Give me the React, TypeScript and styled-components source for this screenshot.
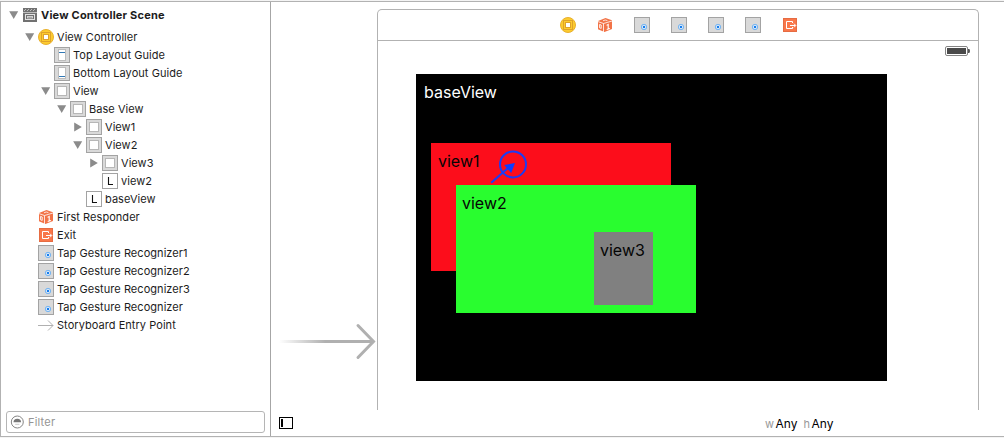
import React from "react";
import styled, { createGlobalStyle } from "styled-components";

const GlobalStyle = createGlobalStyle`
  * { box-sizing: border-box; }
  body { margin: 0; background: #fff; overflow: hidden; }
`;

const Window = styled.div`
  width: 1004px;
  height: 438px;
  display: flex;
  flex-direction: column;
  background: #f4f4f4;
  padding-top: 1px;
  font-family: Inter, "Liberation Sans", sans-serif;
  color: #1c1c1c;
`;

const Panes = styled.div`
  display: flex;
  height: 436px;
  border: solid #b2b2b2;
  border-width: 1px 0 1px 1px;
  background: #fff;
`;

const Outline = styled.aside`
  width: 270px;
  flex: none;
  display: flex;
  flex-direction: column;
  border-right: 1px solid #a6a6a6;
  padding: 4px 5px 3px;
`;

const Tree = styled.div`
  flex: 1;
`;

const Row = styled.div<{ $depth: number }>`
  display: flex;
  align-items: center;
  height: 18px;
  padding-left: ${(p) => p.$depth * 16 + 3}px;
`;

const SceneRow = styled(Row)`
  margin-bottom: 4px;
`;

const Disclosure = styled.span`
  width: 13px;
  height: 16px;
  flex: none;
  display: flex;
`;

const Icon = styled.svg`
  width: 16px;
  height: 16px;
  flex: none;
  display: block;
`;

const Label = styled.span<{ $bold?: boolean }>`
  margin-left: 3px;
  font-size: 11px;
  line-height: 18px;
  font-weight: ${(p) => (p.$bold ? 700 : 400)};
  letter-spacing: ${(p) => (p.$bold ? 0.2 : 0.05)}px;
  white-space: nowrap;
`;

const FilterField = styled.div`
  height: 22px;
  display: flex;
  align-items: center;
  gap: 2px;
  padding-left: 3px;
  border: 1px solid #b5b5b5;
  border-radius: 3px;
  color: #959595;
  font-size: 11px;
  letter-spacing: 0.2px;
`;

const Editor = styled.main`
  flex: 1;
  display: flex;
  flex-direction: column;
`;

const Canvas = styled.div`
  display: flex;
  height: 408px;
  padding-top: 7px;
`;

const EntrySpace = styled.div`
  width: 106px;
  flex: none;
  padding: 312px 0 0 8px;
`;

const Device = styled.section`
  width: 602px;
  border: 1px solid #b2b2b2;
  border-bottom: 0;
  border-radius: 5px 5px 0 0;
`;

const Dock = styled.div`
  height: 31px;
  display: flex;
  align-items: center;
  justify-content: center;
  gap: 21px;
  padding-left: 2px;
  border-bottom: 1px solid #b2b2b2;
`;

const StatusBar = styled.div`
  height: 33px;
  display: flex;
  justify-content: flex-end;
  padding: 5px 8px 0 0;
`;

const BaseView = styled.div`
  position: relative;
  width: 471px;
  height: 307px;
  margin-left: 38px;
  background: #000;
`;

const Box = styled.div<{ $x: number; $y: number; $w: number; $h: number; $fill: string }>`
  position: absolute;
  left: ${(p) => p.$x}px;
  top: ${(p) => p.$y}px;
  width: ${(p) => p.$w}px;
  height: ${(p) => p.$h}px;
  background: ${(p) => p.$fill};
`;

const ViewLabel = styled.div<{ $inset: number; $light?: boolean }>`
  padding: 8px 0 0 ${(p) => p.$inset}px;
  font-size: 16px;
  line-height: 20px;
  white-space: nowrap;
  color: ${(p) => (p.$light ? "#fff" : "#050505")};
`;

const Pointer = styled.svg`
  position: absolute;
  left: 73px;
  top: 75px;
  width: 40px;
  height: 36px;
`;

const BottomBar = styled.footer`
  flex: 1;
  display: flex;
  align-items: center;
  padding-left: 8px;
`;

const SizeClass = styled.div`
  display: flex;
  align-items: baseline;
  gap: 6px;
  margin-left: 472px;
  font-size: 12px;
  font-weight: 400;
  color: #000;
`;

const Axis = styled.span`
  margin-right: 1.5px;
  font-size: 11px;
  color: #999;
`;

type Kind =
  | "scene" | "controller" | "top" | "bottom" | "view" | "label"
  | "responder" | "exit" | "tap" | "entry";

function Tile({ fill = "#d9d9d9" }: { fill?: string }) {
  return <rect x=".5" y=".5" width="15" height="15" fill={fill} stroke="#a3a3a3" />;
}

function Glyph({ kind }: { kind: Kind }) {
  switch (kind) {
    case "scene":
      return (
        <Icon viewBox="0 0 16 16">
          <rect x="1" y="1" width="14" height="14" fill="#717171" />
          <path d="M2 4l2-2M5 4l2-2M8 4l2-2M11 4l2-2" stroke="#c8c8c8" strokeWidth=".9" />
          <path d="M1 5.5h14" stroke="#d0d0d0" strokeWidth=".8" />
          <rect x="3.5" y="7.5" width="9" height="5" fill="none" stroke="#e2e2e2" />
          <rect x="5.5" y="9.5" width="5" height="1.4" fill="none" stroke="#d0d0d0" />
        </Icon>
      );
    case "controller":
      return (
        <Icon viewBox="0 0 16 16">
          <circle cx="8" cy="8" r="7.5" fill="#fccb2f" stroke="#e8b02e" />
          <rect x="3.5" y="3.5" width="9" height="9" fill="none" stroke="#dfa22b" />
          <rect x="5.5" y="5.5" width="5" height="5" fill="#fff" stroke="#dfa22b" />
        </Icon>
      );
    case "top":
    case "bottom":
      return (
        <Icon viewBox="0 0 16 16">
          <Tile />
          <rect x="4.5" y="2.5" width="7" height="11" fill="#fff" stroke="#bcbcbc" />
          <path d={kind === "top" ? "M5 5.5h6" : "M5 11.5h6"} stroke="#3178b5" />
        </Icon>
      );
    case "view":
      return (
        <Icon viewBox="0 0 16 16">
          <Tile />
          <rect x="3.5" y="3.5" width="9" height="9" fill="#fff" stroke="#b7b7b7" />
        </Icon>
      );
    case "label":
      return (
        <Icon viewBox="0 0 16 16">
          <Tile fill="#fff" />
          <path d="M6.5 4v7.5H11" fill="none" stroke="#111" strokeWidth="1.1" />
        </Icon>
      );
    case "responder":
      return (
        <Icon viewBox="0 0 16 16">
          <path d="M1 4L8.5 1 15 3.2V12L7.5 15 1 12.2z" fill="#f27347" />
          <path d="M1 4.6L6.5 6.5 15 4M6.5 6.5V15" fill="none" stroke="#fff" strokeWidth=".8" />
          <path d="M6 3.8l2.2-.8 2.2.6" fill="none" stroke="#fff" strokeWidth=".8" />
          <path d="M2.6 7.4l1.6.6v3.4l-1.6-.6z" fill="none" stroke="#fff" strokeWidth=".9" />
          <path d="M9.6 8.4l1.6-1v4.6M9.7 12.4l3.2-1" fill="none" stroke="#fff" strokeWidth="1.1" />
        </Icon>
      );
    case "exit":
      return (
        <Icon viewBox="0 0 16 16">
          <rect x="1.5" y="1.5" width="13" height="13" fill="#f9774a" stroke="#e66c42" />
          <path d="M10.5 6V4.5h-6v7h6V10" fill="none" stroke="#fff" />
          <path d="M8 8.5h5.5M12 6.7l1.8 1.8-1.8 1.8" fill="none" stroke="#fff" />
        </Icon>
      );
    case "tap":
      return (
        <Icon viewBox="0 0 16 16">
          <Tile />
          <circle cx="10" cy="10" r="2.7" fill="#d3e4f5" stroke="#6caff0" strokeWidth=".9" />
          <rect x="9" y="9" width="2" height="2" fill="#157df0" />
        </Icon>
      );
    default:
      return (
        <Icon viewBox="0 0 16 16">
          <path d="M0 8.5h15M10 3.5l5 5-5 5" fill="none" stroke="#b0b0b0" />
        </Icon>
      );
  }
}

function Arrow({ open }: { open?: boolean }) {
  return (
    <Icon viewBox="0 0 16 16">
      <path d={open ? "M.2 4.2h9L4.7 12z" : "M1.2 3.5v9L8.8 8z"} fill="#8b8b8b" />
    </Icon>
  );
}

const items: { depth: number; kind: Kind; text: string; open?: boolean }[] = [
  { depth: 1, kind: "controller", text: "View Controller", open: true },
  { depth: 2, kind: "top", text: "Top Layout Guide" },
  { depth: 2, kind: "bottom", text: "Bottom Layout Guide" },
  { depth: 2, kind: "view", text: "View", open: true },
  { depth: 3, kind: "view", text: "Base View", open: true },
  { depth: 4, kind: "view", text: "View1", open: false },
  { depth: 4, kind: "view", text: "View2", open: true },
  { depth: 5, kind: "view", text: "View3", open: false },
  { depth: 5, kind: "label", text: "view2" },
  { depth: 4, kind: "label", text: "baseView" },
  { depth: 1, kind: "responder", text: "First Responder" },
  { depth: 1, kind: "exit", text: "Exit" },
  { depth: 1, kind: "tap", text: "Tap Gesture Recognizer1" },
  { depth: 1, kind: "tap", text: "Tap Gesture Recognizer2" },
  { depth: 1, kind: "tap", text: "Tap Gesture Recognizer3" },
  { depth: 1, kind: "tap", text: "Tap Gesture Recognizer" },
  { depth: 1, kind: "entry", text: "Storyboard Entry Point" },
];

const dock: Kind[] = ["controller", "responder", "tap", "tap", "tap", "tap", "exit"];

export default function App() {
  return (
    <Window>
      <GlobalStyle />
      <Panes>
        <Outline>
          <Tree>
            <SceneRow $depth={0}>
              <Disclosure><Arrow open /></Disclosure>
              <Glyph kind="scene" />
              <Label $bold>View Controller Scene</Label>
            </SceneRow>
            {items.map((item) => (
              <Row key={item.text} $depth={item.depth}>
                <Disclosure>{item.open !== undefined && <Arrow open={item.open} />}</Disclosure>
                <Glyph kind={item.kind} />
                <Label>{item.text}</Label>
              </Row>
            ))}
          </Tree>
          <FilterField>
            <Icon viewBox="0 0 16 16">
              <circle cx="7.3" cy="8" r="6" fill="none" stroke="#858585" />
              <path d="M3.5 8.3a3.8 3.6 0 017.6 0z" fill="#777" />
              <path d="M5.2 10.3h4.2" stroke="#c8c8c8" />
            </Icon>
            <span>Filter</span>
          </FilterField>
        </Outline>
        <Editor>
          <Canvas>
            <EntrySpace>
              <svg width="98" height="40" viewBox="0 0 98 40" display="block">
                <defs>
                  <linearGradient id="fade">
                    <stop offset="0" stopColor="#b0b0b0" stopOpacity="0" />
                    <stop offset=".5" stopColor="#b0b0b0" />
                  </linearGradient>
                </defs>
                <rect x="0" y="19" width="93" height="3" fill="url(#fade)" />
                <path d="M79 4.5l15.5 16-15.5 16" fill="none" stroke="#b0b0b0" strokeWidth="3" strokeLinecap="round" />
              </svg>
            </EntrySpace>
            <Device>
              <Dock>
                {dock.map((kind, i) => <Glyph key={i} kind={kind} />)}
              </Dock>
              <StatusBar>
                <svg width="25" height="10" viewBox="0 0 25 10">
                  <rect x=".5" y=".5" width="22" height="9" rx="1.5" fill="#fff" stroke="#858585" />
                  <rect x="2" y="2" width="19" height="6" fill="#4a4a4a" />
                  <path d="M23 3h1q1 0 1 2t-1 2h-1z" fill="#555" />
                </svg>
              </StatusBar>
              <BaseView>
                <ViewLabel $inset={8} $light>baseView</ViewLabel>
                <Box $x={15} $y={69} $w={240} $h={128} $fill="#fc0d1b">
                  <ViewLabel $inset={7}>view1</ViewLabel>
                </Box>
                <Box $x={40} $y={111} $w={240} $h={128} $fill="#29fd2f">
                  <ViewLabel $inset={6}>view2</ViewLabel>
                </Box>
                <Box $x={178} $y={158} $w={59} $h={73} $fill="#808080">
                  <ViewLabel $inset={6}>view3</ViewLabel>
                </Box>
                <Pointer viewBox="0 0 40 36">
                  <circle cx="24" cy="15.4" r="13" fill="none" stroke="#1a3df5" strokeWidth="2" />
                  <path d="M2.2 33.8L19 19" stroke="#1a3df5" strokeWidth="2" />
                  <path d="M26 14l-10.8 2 7 8z" fill="#0b3dff" />
                </Pointer>
              </BaseView>
            </Device>
          </Canvas>
          <BottomBar>
            <svg width="14" height="12" viewBox="0 0 14 12">
              <rect x=".5" y=".5" width="13" height="11" fill="#fff" stroke="#000" />
              <rect x="2" y="2" width="2" height="8" fill="#000" />
            </svg>
            <SizeClass>
              <span><Axis>w</Axis>Any</span>
              <span><Axis>h</Axis>Any</span>
            </SizeClass>
          </BottomBar>
        </Editor>
      </Panes>
    </Window>
  );
}
